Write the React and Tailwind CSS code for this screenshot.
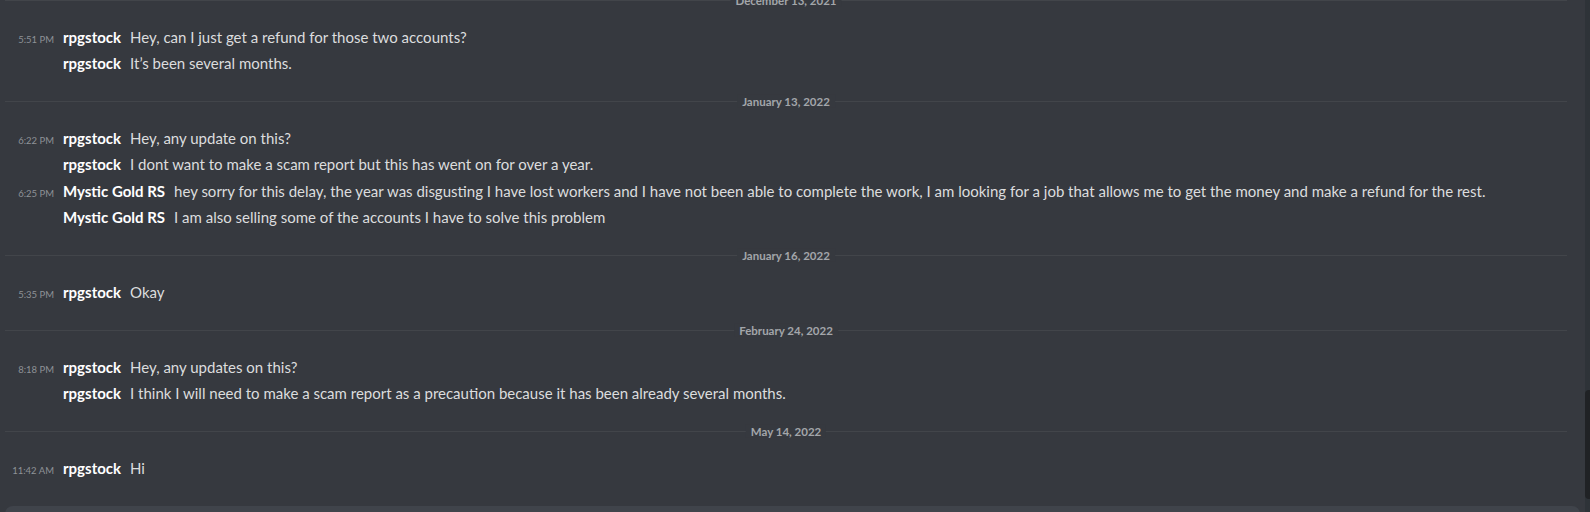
const sections = [
  {
    date: 'December 13, 2021',
    rows: [
      { time: '5:51 PM', user: 'rpgstock', text: 'Hey, can I just get a refund for those two accounts?' },
      { user: 'rpgstock', text: 'It’s been several months.' },
    ],
  },
  {
    date: 'January 13, 2022',
    rows: [
      { time: '6:22 PM', user: 'rpgstock', text: 'Hey, any update on this?' },
      { user: 'rpgstock', text: 'I dont want to make a scam report but this has went on for over a year.' },
      {
        time: '6:25 PM',
        user: 'Mystic Gold RS',
        text: 'hey sorry for this delay, the year was disgusting I have lost workers and I have not been able to complete the work, I am looking for a job that allows me to get the money and make a refund for the rest.',
      },
      { user: 'Mystic Gold RS', text: 'I am also selling some of the accounts I have to solve this problem' },
    ],
  },
  {
    date: 'January 16, 2022',
    rows: [{ time: '5:35 PM', user: 'rpgstock', text: 'Okay' }],
  },
  {
    date: 'February 24, 2022',
    rows: [
      { time: '8:18 PM', user: 'rpgstock', text: 'Hey, any updates on this?' },
      {
        user: 'rpgstock',
        text: 'I think I will need to make a scam report as a precaution because it has been already several months.',
      },
    ],
  },
  {
    date: 'May 14, 2022',
    rows: [{ time: '11:42 AM', user: 'rpgstock', text: 'Hi' }],
  },
]

function DateDivider({ date }) {
  return (
    <div className="relative ml-[5px] mr-[18px] h-px bg-[#42454a]">
      <span className="absolute left-1/2 top-0 -translate-x-1/2 -translate-y-1/2 bg-[#36393f] px-[5px] text-[11.5px] font-bold leading-[13px] text-[#a3a6aa] whitespace-nowrap">
        {date}
      </span>
    </div>
  )
}

// group start (has a timestamp) gets a hair more room when it isn't the first row
function Row({ time, user, text, first }) {
  return (
    <div
      className={`flex h-[26px] items-baseline pt-[1px] whitespace-nowrap ${time && !first ? 'mt-px' : ''}`}
    >
      <span className="w-[54px] shrink-0 text-right text-[9.5px] text-[#8e9297]">{time}</span>
      <span className="ml-[9px] text-[15px] font-bold text-white">{user}</span>
      <span className="ml-[9px] text-[15px] text-[#dcddde]">{text}</span>
    </div>
  )
}

export default function App() {
  return (
    <div
      className="flex h-[512px] w-[1590px] overflow-hidden bg-[#36393f]"
      style={{ fontFamily: 'Lato, "Open Sans", sans-serif' }}
    >
      <div className="flex min-w-0 flex-1 flex-col">
        <div className="flex flex-col">
          {sections.map((s) => (
            <div key={s.date}>
              <DateDivider date={s.date} />
              <div className="pt-6 pb-6">
                {s.rows.map((r, j) => (
                  <Row key={j} first={j === 0} {...r} />
                ))}
              </div>
            </div>
          ))}
        </div>
        <div className="mt-[0px] ml-[5px] mr-[5px] h-[40px] shrink-0 rounded-lg bg-[#40444b]" />
      </div>
      <div className="relative h-full w-[5px] shrink-0 bg-[#2e3338]">
        <div className="absolute left-0 top-[390px] h-[109px] w-[5px] rounded-l bg-[#202225]" />
      </div>
    </div>
  )
}
